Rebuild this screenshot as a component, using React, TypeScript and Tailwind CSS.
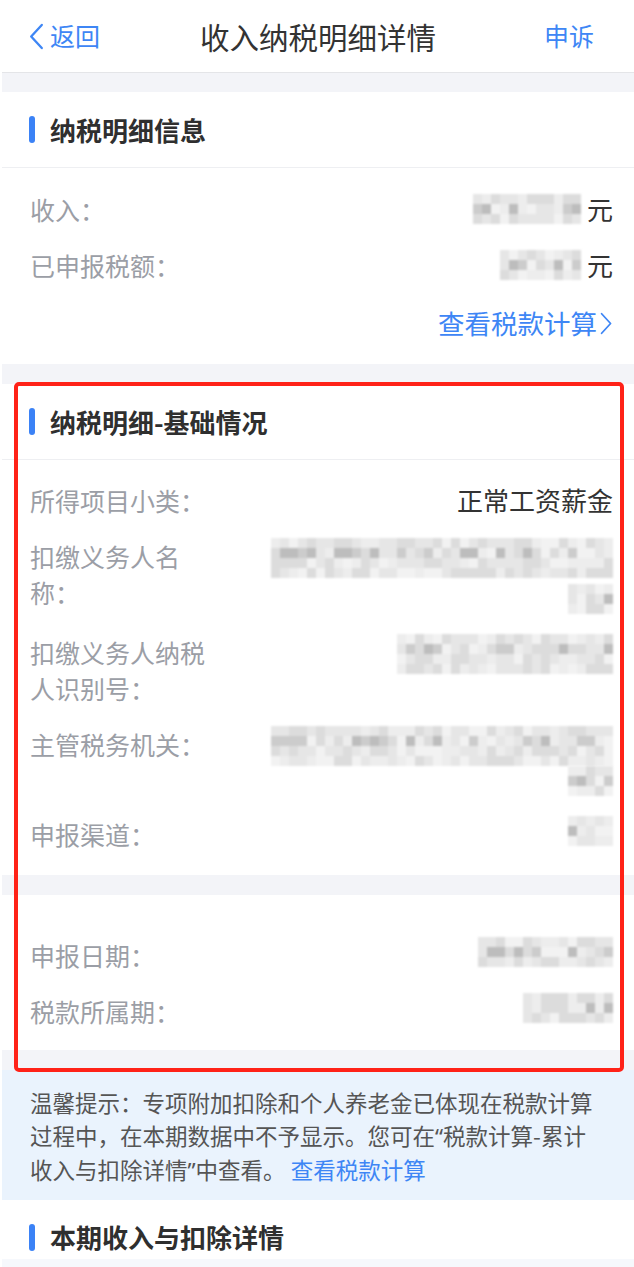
import React from "react";

const shades = [
  "bg-[#f2f2f2]",
  "bg-[#e6e6e6]",
  "bg-[#dcdcdc]",
  "bg-[#cccccc]",
  "bg-[#bdbdbd]",
  "bg-[#ededed]",
];

// blurred value placeholder, a pixel mosaic like the screenshot
function Mosaic({ cols, rows = 3, seed = 1 }: { cols: number; rows?: number; seed?: number }) {
  let s = seed * 9301 + 49297;
  const next = () => {
    s = (s * 9301 + 49297) % 233280;
    return s / 233280;
  };
  return (
    <div className="flex flex-col blur-[1px]">
      {Array.from({ length: rows }).map((_, r) => (
        <div key={r} className="flex">
          {Array.from({ length: cols }).map((_, c) => {
            let v = Math.floor(next() * shades.length);
            if (r !== 1 && v > 2 && v < 5) v = v - 2;
            return <div key={c} className={`w-[9px] h-[10px] ${shades[v]}`} />;
          })}
        </div>
      ))}
    </div>
  );
}

function SectionTitle({ title }: { title: string }) {
  return (
    <div className="h-[76px] flex items-center pl-[27px] border-b border-[#eeeff2]">
      <span className="w-[6px] h-[27px] rounded-full bg-[#3b82f6]" />
      <span className="ml-[15px] text-[26px] font-semibold text-[#2f2f2f]">{title}</span>
    </div>
  );
}

function Row({ label, children }: { label: string; children?: React.ReactNode }) {
  return (
    <div className="flex items-start py-[10px]">
      <div className="w-[182px] shrink-0 text-[25px] leading-[36px] text-[#9b9ea6]">{label}</div>
      <div className="flex-1 flex flex-col items-end text-[26px] leading-[36px] text-[#333]">{children}</div>
    </div>
  );
}

function Chevron({ className }: { className: string }) {
  return (
    <svg viewBox="0 0 16 28" className={className} fill="none" stroke="currentColor" strokeWidth="2.4" strokeLinecap="round" strokeLinejoin="round">
      <polyline points="14,2 3,14 14,26" />
    </svg>
  );
}

export default function App() {
  return (
    <div className="relative bg-white pl-[2px] h-[1267px] overflow-hidden font-['Noto_Sans_CJK_SC','Noto_Sans',sans-serif]">
      {/* Header */}
      <div className="h-[73px] grid grid-cols-[1fr_auto_1fr] items-center border-b border-[#e4e5e8]">
        <div className="flex items-center pl-[26px] text-[#3e86f5]">
          <Chevron className="w-[16px] h-[27px]" />
          <span className="ml-[6px] text-[25px]">返回</span>
        </div>
        <div className="text-[29.5px] text-[#333]">收入纳税明细详情</div>
        <div className="justify-self-end pr-[40px] text-[25px] text-[#3e86f5]">申诉</div>
      </div>
      <div className="h-[19px] bg-[#f3f4f8]" />

      {/* 纳税明细信息 */}
      <SectionTitle title="纳税明细信息" />
      <div className="pl-[28px] pr-[21px] pt-[13px]">
        <Row label="收入：">
          <div className="flex items-center">
            <Mosaic cols={12} seed={3} />
            <span className="ml-[6px]">元</span>
          </div>
        </Row>
        <Row label="已申报税额：">
          <div className="flex items-center">
            <Mosaic cols={9} seed={7} />
            <span className="ml-[6px]">元</span>
          </div>
        </Row>
        <div className="flex justify-end items-center pt-[12px] pb-[23px] text-[26.5px] leading-[36px] text-[#3e86f5]">
          查看税款计算
          <svg viewBox="0 0 16 28" className="w-[13px] h-[25px] ml-[3px]" fill="none" stroke="currentColor" strokeWidth="2.2" strokeLinecap="round" strokeLinejoin="round">
            <polyline points="2,2 13,14 2,26" />
          </svg>
        </div>
      </div>
      <div className="h-[20px] bg-[#f3f4f8]" />

      {/* 纳税明细-基础情况 */}
      <SectionTitle title="纳税明细-基础情况" />
      <div className="pl-[28px] pr-[21px] pt-[12px] pb-[13px]">
        <Row label="所得项目小类：">正常工资薪金</Row>
        <Row label="扣缴义务人名称：">
          <Mosaic cols={38} rows={4} seed={11} />
          <div className="mt-[6px]">
            <Mosaic cols={5} seed={13} />
          </div>
        </Row>
        <Row label="扣缴义务人纳税人识别号：">
          <Mosaic cols={24} rows={4} seed={17} />
        </Row>
        <Row label="主管税务机关：">
          <Mosaic cols={38} rows={4} seed={19} />
          <div>
            <Mosaic cols={5} seed={23} />
          </div>
        </Row>
        <Row label="申报渠道：">
          <Mosaic cols={5} seed={29} />
        </Row>
      </div>
      <div className="h-[20px] bg-[#f3f4f8]" />
      <div className="pl-[28px] pr-[21px] pt-[32px] pb-[11px]">
        <Row label="申报日期：">
          <Mosaic cols={15} seed={31} />
        </Row>
        <Row label="税款所属期：">
          <Mosaic cols={10} seed={37} />
        </Row>
      </div>
      <div className="h-[20px] bg-[#f3f4f8]" />

      {/* tip */}
      <div className="bg-[#eaf3fd] pl-[28px] pr-[39px] pt-[16px] pb-[13px] text-[22.5px] leading-[33px] text-[#555]">
        温馨提示：专项附加扣除和个人养老金已体现在税款计算过程中，在本期数据中不予显示。您可在
        <span className="font-['Noto_Sans',sans-serif]">“</span>税款计算-累计收入与扣除详情
        <span className="font-['Noto_Sans',sans-serif]">”</span>中查看。{" "}
        <span className="text-[#3e86f5]">查看税款计算</span>
      </div>

      {/* 本期收入与扣除详情 */}
      <div className="h-[59px] flex items-end pb-[4px] pl-[27px]">
        <span className="w-[6px] h-[27px] rounded-full bg-[#3b82f6] mb-[4px]" />
        <span className="ml-[15px] text-[26px] leading-[36px] font-semibold text-[#2f2f2f]">本期收入与扣除详情</span>
      </div>
      <div className="h-[40px] bg-[#f6f8fc]" />

      {/* red annotation frame */}
      <div className="absolute left-[14px] top-[382px] w-[610px] h-[690px] border-4 border-[#ff2218] rounded-[5px] pointer-events-none" />
    </div>
  );
}
